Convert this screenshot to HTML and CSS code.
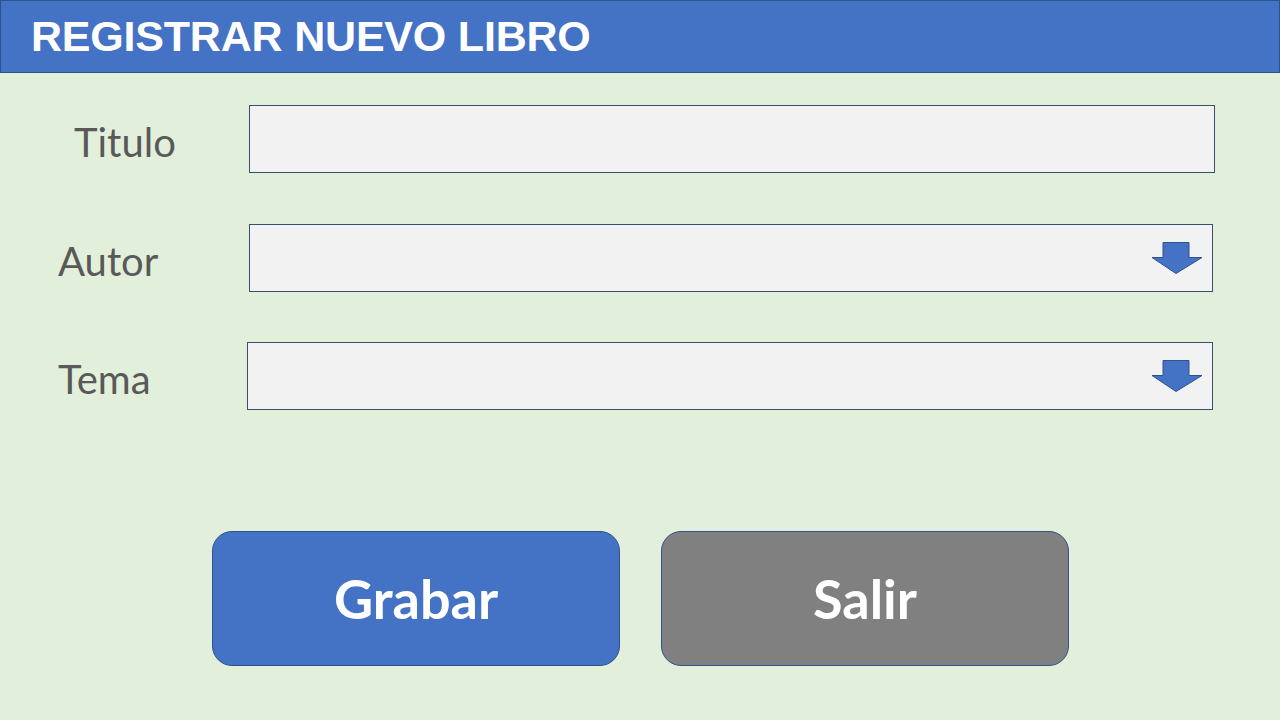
FILE: index.html
```html
<!DOCTYPE html>
<html lang="es">
<head>
<meta charset="utf-8">
<title>Registrar nuevo libro</title>
<link rel="stylesheet" href="styles.css">
</head>
<body>
<header class="header">
  <h1 class="title">REGISTRAR NUEVO LIBRO</h1>
</header>
<main class="form">
  <div class="row row-titulo">
    <label class="label label-titulo">Titulo</label>
    <div class="field field-titulo"></div>
  </div>
  <div class="row row-autor">
    <label class="label">Autor</label>
    <div class="field field-autor">
      <svg class="arrow" width="54" height="34" viewBox="0 0 54 34"><path d="M13 1.5 H39 V16.5 H52 L26 32.5 L2 16.5 H13 Z" fill="#4472C4" stroke="#2F528F" stroke-width="1"/></svg>
    </div>
  </div>
  <div class="row row-tema">
    <label class="label">Tema</label>
    <div class="field field-tema">
      <svg class="arrow" width="54" height="34" viewBox="0 0 54 34"><path d="M13 1.5 H39 V16.5 H52 L26 32.5 L2 16.5 H13 Z" fill="#4472C4" stroke="#2F528F" stroke-width="1"/></svg>
    </div>
  </div>
  <div class="actions">
    <button class="btn btn-primary">Grabar</button>
    <button class="btn btn-secondary">Salir</button>
  </div>
</main>
</body>
</html>
```
FILE: styles.css
```css
html, body {
  margin: 0;
  padding: 0;
}
body {
  width: 1280px;
  height: 720px;
  background: #E2EFDA;
  overflow: hidden;
  font-family: "Lato", "Noto Sans", sans-serif;
}
.header {
  background: #4472C4;
  border: 1px solid #2F528F;
  box-sizing: border-box;
  height: 73px;
  display: flex;
  align-items: center;
  padding-left: 30px;
}
.title {
  margin: 0;
  color: #fff;
  font-family: "Liberation Sans", Arial, sans-serif;
  font-weight: bold;
  font-size: 43px;
  letter-spacing: -0.2px;
  line-height: 1;
  padding-bottom: 1px;
}
.form {
  display: flex;
  flex-direction: column;
}
.row {
  display: flex;
  align-items: center;
  height: 68px;
}
.row-titulo { margin-top: 32px; }
.row-autor { margin-top: 51px; }
.row-tema { margin-top: 50px; }
.label {
  color: #595959;
  font-size: 40px;
  width: 191px;
  padding-left: 58px;
  box-sizing: border-box;
  padding-top: 6px;
}
.label-titulo {
  padding-left: 74px;
}
.field {
  height: 100%;
  box-sizing: border-box;
  background: #F2F2F2;
  border: 1px solid #3B4E70;
  display: flex;
  align-items: center;
  justify-content: flex-end;
  padding-right: 8px;
}
.field-titulo { width: 966px; margin-left: 58px; }
.field-autor { width: 964px; margin-left: 58px; }
.field-tema { width: 966px; margin-left: 56px; height: 68px; }
.arrow {
  display: block;
  margin-top: 0;
}
.row-tema { margin-top: 50px; height: 67px; }
.actions {
  display: flex;
  gap: 41px;
  margin-top: 122px;
  padding-left: 212px;
}
.btn {
  width: 408px;
  height: 135px;
  border: 1px solid #2F528F;
  border-radius: 20px;
  color: #fff;
  font-family: "Lato", "Noto Sans", sans-serif;
  font-weight: bold;
  font-size: 54px;
  padding: 0;
}
.btn-primary { background: #4472C4; }
.btn-secondary { background: #808080; }
```
